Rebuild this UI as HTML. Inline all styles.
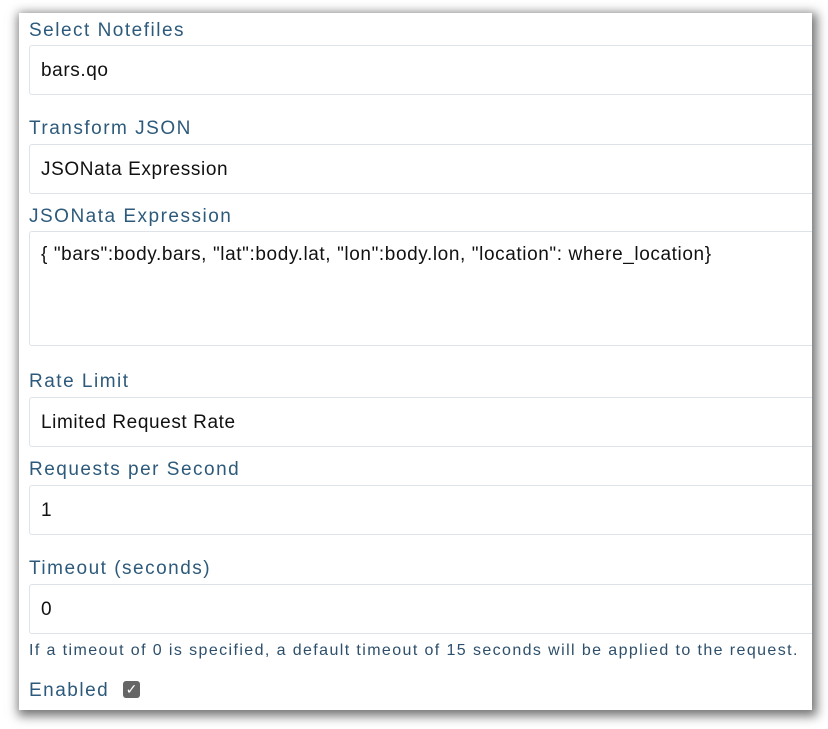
<!DOCTYPE html>
<html><head><style>
body{margin:0;width:828px;height:729px;background:#fff;position:relative;overflow:hidden;font-family:"Liberation Sans",sans-serif;}
.panel{position:absolute;left:19px;top:13px;width:793px;height:697px;background:#fff;box-shadow:2px 3px 10px 3px rgba(0,0,0,0.55);overflow:hidden;}
.l{position:absolute;left:10px;color:#2d5a7b;font-size:19px;letter-spacing:1.5px;}
.i{position:absolute;left:10px;width:800px;border:1px solid #dde3e8;border-radius:3px;box-sizing:border-box;color:#111;font-size:19px;padding-left:11px;letter-spacing:0.6px;}
</style></head><body>
<div class="panel">
<div class="l" style="top:7px">Select Notefiles</div>
<div class="i" style="top:32px;height:50px;line-height:50px">bars.qo</div>
<div class="l" style="top:105px">Transform JSON</div>
<div class="i" style="top:131px;height:50px;line-height:50px">JSONata Expression</div>
<div class="l" style="top:193px">JSONata Expression</div>
<div class="i" style="top:218px;height:115px;padding-top:12px;line-height:22px">{ "bars":body.bars, "lat":body.lat, "lon":body.lon, "location": where_location}</div>
<div class="l" style="top:358px">Rate Limit</div>
<div class="i" style="top:384px;height:50px;line-height:50px">Limited Request Rate</div>
<div class="l" style="top:446px">Requests per Second</div>
<div class="i" style="top:472px;height:50px;line-height:50px">1</div>
<div class="l" style="top:545px">Timeout (seconds)</div>
<div class="i" style="top:571px;height:50px;line-height:50px">0</div>
<div class="l" style="top:629px;font-size:16px;letter-spacing:1.4px;color:#2d4f6b">If a timeout of 0 is specified, a default timeout of 15 seconds will be applied to the request.</div>
<div class="l" style="top:667px">Enabled</div>
<div style="position:absolute;left:104px;top:668px;width:17px;height:17px;background:#666;border-radius:3px;color:#fff;font-size:14px;line-height:17px;text-align:center">✓</div>
</div>
</body></html>
